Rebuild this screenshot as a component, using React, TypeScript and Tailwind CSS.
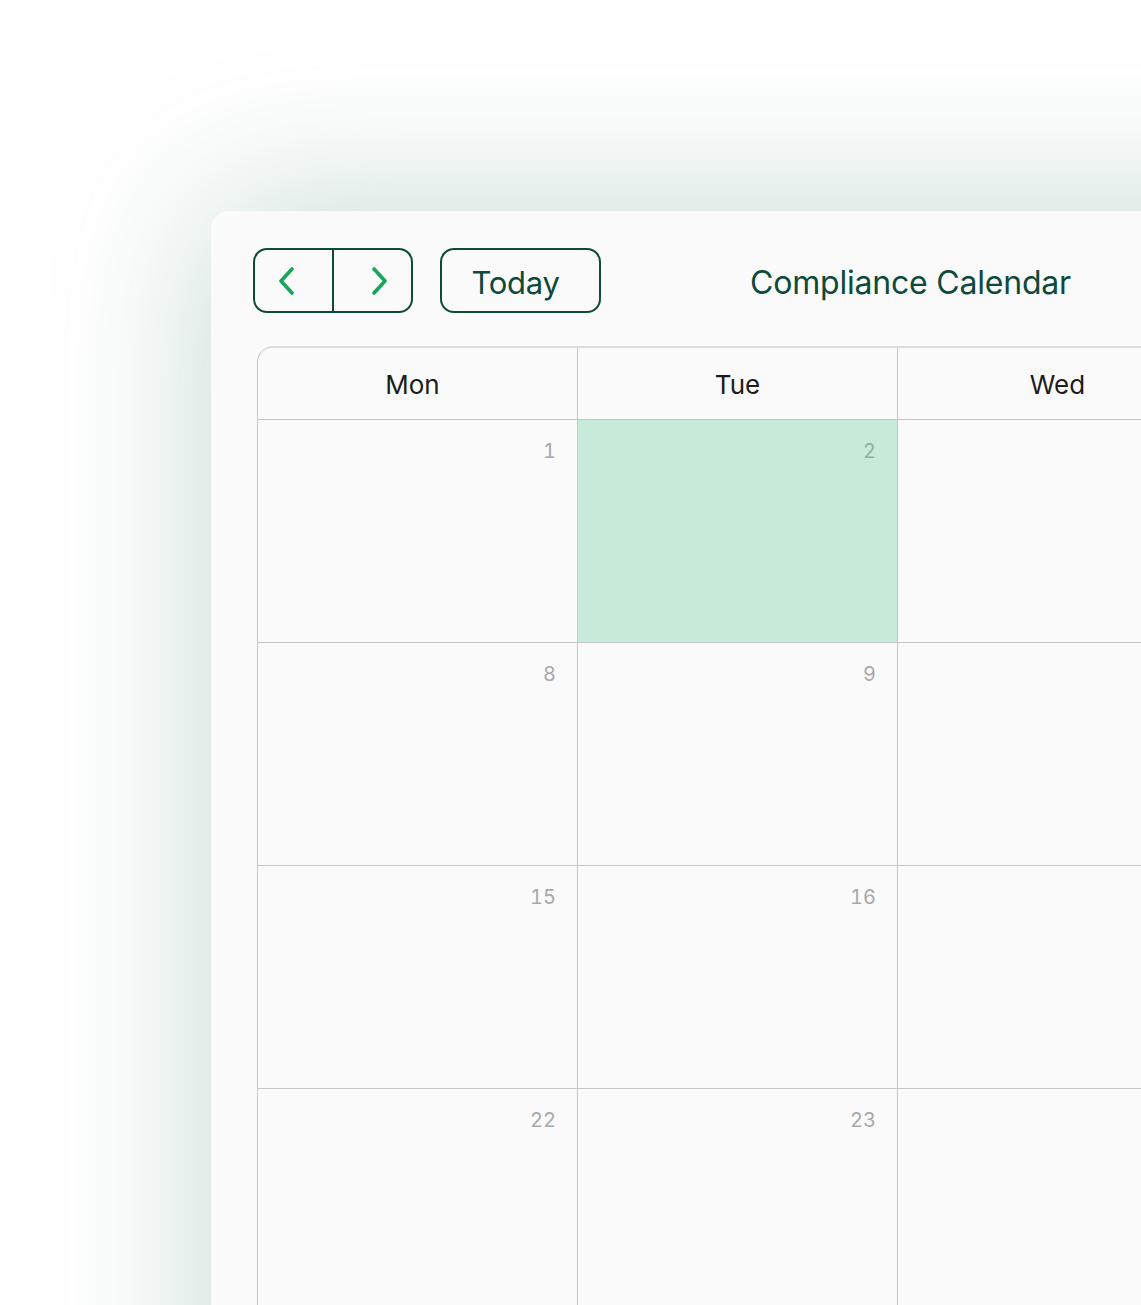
import React from "react";

const days = ["Mon", "Tue", "Wed", "Thu", "Fri"];
const weeks = [
  [1, 2, 3, 4, 5],
  [8, 9, 10, 11, 12],
  [15, 16, 17, 18, 19],
  [22, 23, 24, 25, 26],
];

export default function App() {
  return (
    <div
      className="w-[1141px] h-[1305px] overflow-hidden bg-white pt-[211px] pl-[211px]"
      style={{ fontFamily: "Inter, 'Noto Sans', sans-serif" }}
    >
      <div className="w-[1700px] h-[1300px] rounded-tl-[18px] bg-[#fafafa] shadow-[0_0_160px_6px_rgba(18,110,70,0.24)] pl-[42px] pt-[37px]">
        <div className="flex items-center h-[65px]">
          <div className="flex h-[65px] w-[160px] rounded-[14px] border-2 border-[#0e4a3a]">
            <button className="flex-1 flex items-center justify-start pl-[22px] border-r-2 border-[#0e4a3a]">
              <svg width="18" height="30" viewBox="0 0 18 30" fill="none">
                <path d="M15 3 L4 15 L15 27" stroke="#17a658" strokeWidth="3.6" strokeLinecap="round" strokeLinejoin="round" />
              </svg>
            </button>
            <button className="flex-1 flex items-center justify-end pr-[22px]">
              <svg width="18" height="30" viewBox="0 0 18 30" fill="none">
                <path d="M3 3 L14 15 L3 27" stroke="#17a658" strokeWidth="3.6" strokeLinecap="round" strokeLinejoin="round" />
              </svg>
            </button>
          </div>
          <button className="ml-[27px] h-[65px] w-[161px] rounded-[14px] border-2 border-[#0e4a3a] text-[31px] text-[#0e4a3a] leading-none pt-[4px] pr-[10px] tracking-[-0.3px]">
            Today
          </button>
          <h1 className="ml-[149px] text-[32px] text-[#0d4a3a] leading-none pt-[5px] tracking-[-0.2px]">
            Compliance Calendar
          </h1>
        </div>

        <div className="mt-[33px] ml-[4px] w-[1602px] rounded-tl-[16px] border-l border-t-2 border-t-[#dcdcdc] border-l-[#c6c6c6] overflow-hidden">
          <div className="grid grid-cols-[repeat(5,320px)]">
            {days.map((d, i) => (
              <div
                key={d}
                className={
                  "h-[72px] flex items-center justify-center border-r border-b border-[#c6c6c6] text-[26px] text-[#1c1c1c] pt-[2px] " +
                  (i === 0 ? "pr-[10px]" : "")
                }
              >
                {d}
              </div>
            ))}
          </div>
          {weeks.map((w, i) => (
            <div key={i} className="grid grid-cols-[repeat(5,320px)]">
              {w.map((n) => (
                <div
                  key={n}
                  className={
                    "h-[223px] border-r border-b border-[#c6c6c6] flex justify-end pr-[21px] pt-[21px] text-[20px] leading-none tabular-nums " +
                    (n === 2 ? "bg-[#c6ebd9] text-[#8fb3a0]" : "text-[#a9a9a9]")
                  }
                >
                  {n}
                </div>
              ))}
            </div>
          ))}
        </div>
      </div>
    </div>
  );
}
